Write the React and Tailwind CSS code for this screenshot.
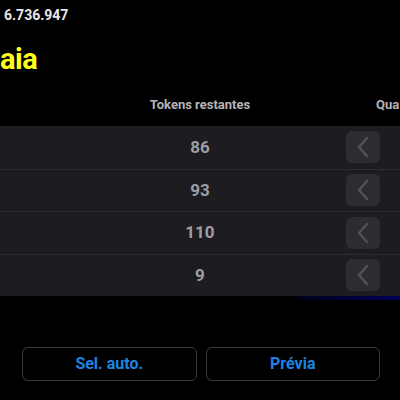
const rows = [86, 93, 110, 9];

const Chevron = () => (
    <svg width="14" height="22" viewBox="0 0 14 22" fill="none">
        <polyline points="11,2 3,11 11,20" stroke="#515258" strokeWidth="2.4" strokeLinecap="round" strokeLinejoin="round" />
    </svg>
);

const App = () => {
    return (
        <div className="w-[400px] h-[400px] bg-black overflow-hidden relative" style={{ fontFamily: 'Roboto, "Noto Sans", sans-serif' }}>
            <div className="pl-[4px] pt-[6px] text-[14px] font-bold text-[#e6e6e6] leading-[18px]">6.736.947</div>
            <h1 className="mt-[18px] text-[29px] font-bold text-[#ffff1a] leading-[34px] tracking-[-0.5px]">aia</h1>

            <div className="mt-[20px] h-[30px] pt-[1px] flex items-start relative leading-[16px]">
                <div className="w-full text-center text-[13px] font-bold text-[#b4b4b8]">Tokens restantes</div>
                <div className="absolute left-[376px] top-[1px] text-[13px] font-bold text-[#b4b4b8]">Qua</div>
            </div>

            <div className="bg-[#1c1c21]">
                {rows.map((n, i) => (
                    <div key={i} className={`h-[42.5px] flex items-center relative ${i > 0 ? 'border-t border-[#2c2c32]' : ''}`}>
                        <div className="w-full text-center text-[17px] font-bold text-[#9d9da2]">{n}</div>
                        <div className="absolute left-[346px] w-[34px] h-[32px] rounded-[6px] bg-[#2c2d33] flex items-center justify-center">
                            <Chevron />
                        </div>
                    </div>
                ))}
            </div>
            <div className="ml-[298px] h-[4px] bg-gradient-to-r from-[#00001a] to-[#00005a]" />

            <div className="mt-[47px] flex gap-[9px] pl-[22px] pr-[20px]">
                <button className="flex-1 h-[34px] rounded-[6px] border border-[#3a3a3f] text-[16px] font-bold text-[#1c84e2]">Sel. auto.</button>
                <button className="flex-1 h-[34px] rounded-[6px] border border-[#3a3a3f] text-[16px] font-bold text-[#1c84e2]">Prévia</button>
            </div>
        </div>
    );
};

export default App;
